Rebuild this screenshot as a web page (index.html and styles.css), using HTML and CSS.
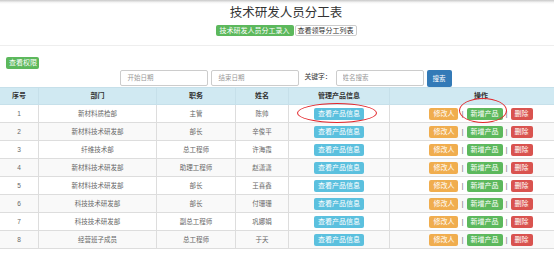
FILE: index.html
```html
<!DOCTYPE html>
<html lang="zh-CN">
<head>
    <meta charset="UTF-8">
    <meta name="viewport" content="width=device-width, initial-scale=1.0">
    <title>技术研发人员分工表</title>
    <link rel="stylesheet" href="styles.css">
</head>
<body>
    <div class="topbar"></div>

    <div class="page">
        <div class="head">
            <h1>技术研发人员分工表</h1>
            <div class="head-links">
                <a class="btn btn-success btn-big">技术研发人员分工录入</a>
                <a class="btn btn-default">查看领导分工列表</a>
            </div>
        </div>

        <div class="toolbar">
            <a class="btn btn-success btn-perm">查看权限</a>
        </div>

        <form class="search">
            <input type="text" class="field" placeholder="开始日期">
            <input type="text" class="field" placeholder="结束日期">
            <label class="kw">关键字：</label>
            <input type="text" class="field" placeholder="姓名搜索">
            <button type="button" class="btn btn-primary btn-search">搜索</button>
        </form>

        <table class="list">
            <thead>
                <tr>
                    <th class="c-no">序号</th>
                    <th class="c-dept">部门</th>
                    <th class="c-job">职务</th>
                    <th class="c-name">姓名</th>
                    <th class="c-info">管理产品信息</th>
                    <th class="c-op">操作</th>
                </tr>
            </thead>
            <tbody id="rows"></tbody>
        </table>

        <!-- red annotation marks -->
        <span class="mark mark-info"></span>
        <span class="mark mark-add"></span>
    </div>

    <script>
        // staff list
        var staff = [
            ['新材料质检部', '主管', '陈帅'],
            ['新材料技术研发部', '部长', '辛俊平'],
            ['纤维技术部', '总工程师', '许海霞'],
            ['新材料技术研发部', '助理工程师', '赵潇潇'],
            ['新材料技术研发部', '部长', '王喜鑫'],
            ['科技技术研发部', '部长', '付珊珊'],
            ['科技技术研发部', '副总工程师', '巩娜娟'],
            ['经营班子成员', '总工程师', '于天']
        ];

        var html = '';
        staff.forEach(function (s, i) {
            html += '<tr>' +
                '<td>' + (i + 1) + '</td>' +
                '<td>' + s[0] + '</td>' +
                '<td>' + s[1] + '</td>' +
                '<td>' + s[2] + '</td>' +
                '<td><a class="btn btn-info">查看产品信息</a></td>' +
                '<td><a class="btn btn-warning">修改人</a><span class="sep">|</span>' +
                '<a class="btn btn-success">新增产品</a><span class="sep">|</span>' +
                '<a class="btn btn-danger">删除</a></td>' +
                '</tr>';
        });
        document.getElementById('rows').innerHTML = html;
    </script>
</body>
</html>
```

FILE: styles.css
```css
html, body {
    overflow: hidden;
}

body {
    margin: 0;
    padding: 0;
    background-color: #fff;
    font-family: "Liberation Sans", "Noto Sans CJK SC", sans-serif;
    font-size: 7px;
    line-height: 1;
    color: #333;
}

.topbar {
    height: 4px;
    background: linear-gradient(#c8c8c8, #f4f4f4 60%, #fff);
}

.page {
    position: relative;
    width: 572px;
}

.head {
    text-align: center;
    border-bottom: 1px solid #eee;
    padding-bottom: 9px;
}

h1 {
    margin: 0;
    font-size: 12.5px;
    line-height: 18px;
    font-weight: normal;
    color: #333;
}

.head-links {
    margin-top: 3px;
    display: flex;
    justify-content: center;
    gap: 1px;
}

.btn {
    display: inline-block;
    height: 12px;
    line-height: 12px;
    padding: 0 4px;
    font-size: 7px;
    color: #fff;
    border-radius: 2px;
    box-sizing: border-box;
    white-space: nowrap;
    vertical-align: middle;
    border: none;
}

.btn-big {
    height: 11px;
    line-height: 11px;
    font-size: 7px;
    padding: 0 4px;
}

.btn-default {
    height: 11px;
    line-height: 9px;
    color: #333;
    background-color: #fff;
    border: 1px solid #ccc;
    padding: 0 2px;
}

.btn-success {
    background-color: #5cb85c;
}

.btn-info {
    background-color: #5bc0de;
}

.btn-warning {
    background-color: #f0ad4e;
}

.btn-danger {
    background-color: #d9534f;
}

.btn-primary {
    background-color: #337ab7;
}

.toolbar {
    display: flex;
    padding: 11px 0 0 6px;
}

.btn-perm {
    padding: 0 3px;
    width: 33px;
}

.search {
    display: flex;
    justify-content: center;
    align-items: center;
    gap: 3px;
    margin: 0;
    height: 17px;
}

.field {
    width: 88px;
    height: 16px;
    padding: 0 6px;
    box-sizing: border-box;
    border: 1px solid #ccc;
    border-radius: 2px;
    font-size: 6.5px;
    font-family: inherit;
    color: #555;
}

.field::placeholder {
    color: #999;
}

.kw {
    font-size: 6.8px;
    color: #333;
    padding: 0 1px 0 2px;
}

.btn-search {
    width: 25px;
    height: 17px;
    line-height: 17px;
    padding: 0;
    font-family: inherit;
    font-size: 6.5px;
    text-align: center;
    margin-top: 1px;
}

.list {
    width: 573px;
    margin-top: 1px;
    border-collapse: collapse;
    table-layout: fixed;
    font-size: 6.5px;
    color: #666;
}

.list th,
.list td {
    text-align: center;
    border: 1px solid #ddd;
    border-left-color: #e8e8e8;
    padding: 0;
    line-height: 12px;
}

.list th {
    height: 16px;
    background-color: #d0e9f2;
    color: #333;
    font-size: 7px;
    font-weight: bold;
    border-color: #c6e0ea;
}

.list td {
    height: 17px;
}

.list tbody tr:nth-child(odd) {
    background-color: #fff;
}

.list tbody tr:nth-child(even) {
    background-color: #f9f9f9;
}

.list tr > :first-child {
    border-left: none;
}

.c-no { width: 38px; }
.c-dept { width: 117px; }
.c-job { width: 78px; }
.c-name { width: 52px; }
.c-info { width: 100px; }

.sep {
    display: inline-block;
    margin: 0 3px;
    color: #777;
    font-size: 8px;
    line-height: 12px;
    vertical-align: middle;
}

.mark {
    position: absolute;
    border: 1.5px solid #e3262b;
    border-radius: 50%;
    box-sizing: border-box;
}

.mark-info {
    left: 297px;
    top: 99px;
    width: 80px;
    height: 20px;
}

.mark-add {
    left: 459px;
    top: 94px;
    width: 48px;
    height: 25px;
}
```
